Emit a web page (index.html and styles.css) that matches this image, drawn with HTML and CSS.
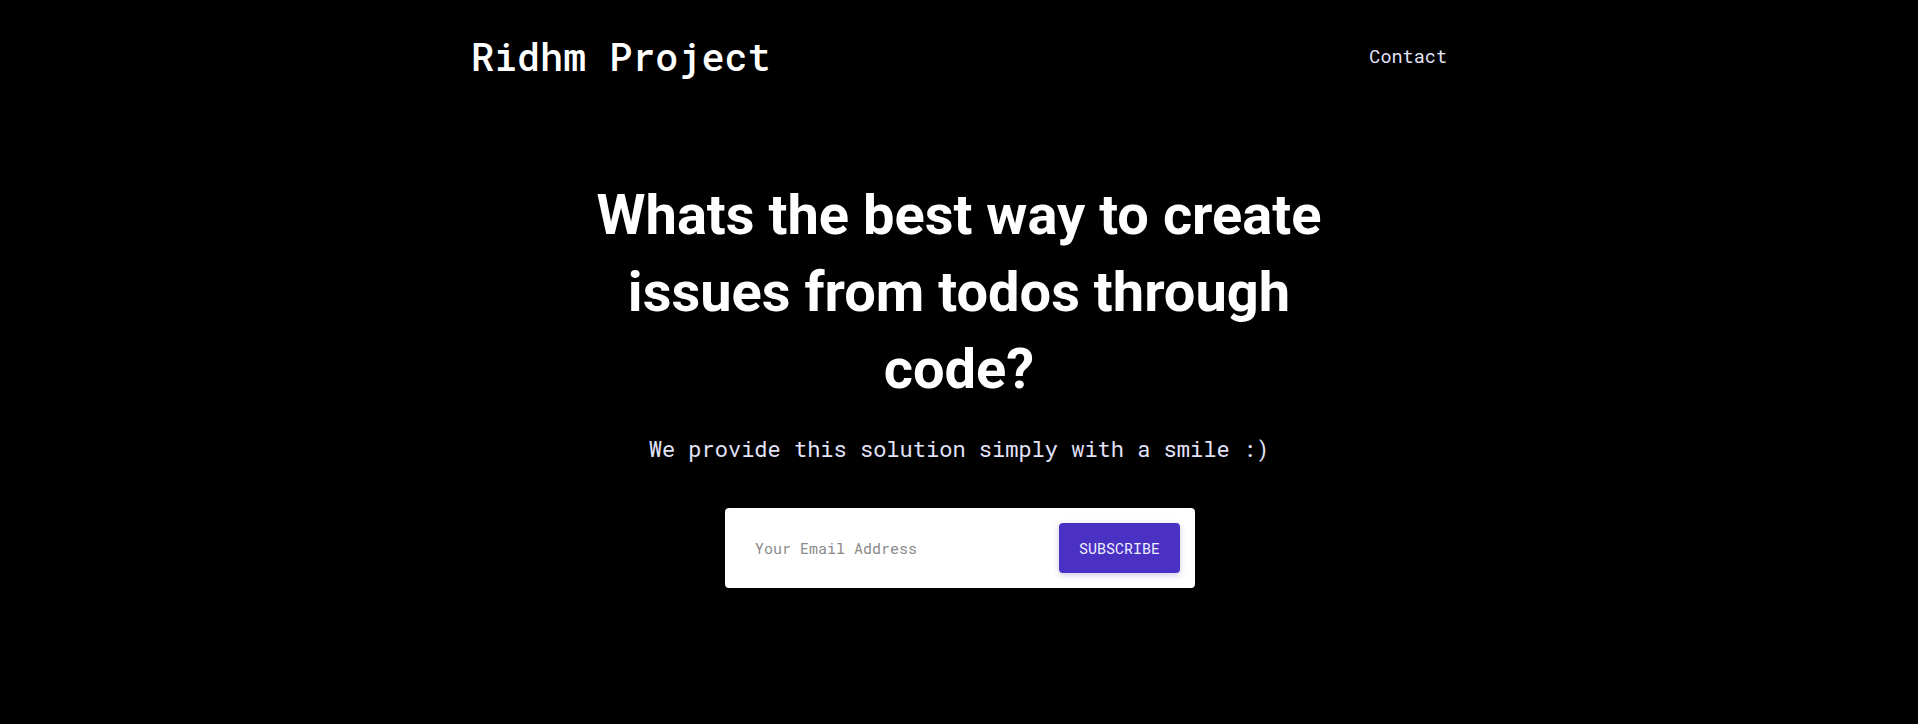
FILE: index.html
```html
<!DOCTYPE html>
<html lang="en">
<head>
<meta charset="utf-8">
<title>Ridhm Project</title>
<link rel="stylesheet" href="styles.css">
</head>
<body>
<div class="container">
  <header class="header">
    <a class="logo" href="#">Ridhm Project</a>
    <nav class="nav"><a class="nav-link" href="#">Contact</a></nav>
  </header>
  <main class="hero">
    <h1 class="title">Whats the best way to create issues from todos through code?</h1>
    <p class="subtitle">We provide this solution simply with a smile :)</p>
    <form class="subscribe">
      <input class="email" type="email" placeholder="Your Email Address" autofocus>
      <button class="btn" type="button">SUBSCRIBE</button>
    </form>
  </main>
</div>
</body>
</html>
```

FILE: styles.css
```css
html, body {
  margin: 0;
  padding: 0;
  background: #000;
}
body {
  font-family: "Roboto Mono", "DejaVu Sans Mono", "Liberation Mono", monospace;
  color: #fff;
}
.container {
  max-width: 1024px;
  margin: 0 auto;
  padding: 0 24px;
  box-sizing: border-box;
}
.header {
  height: 112px;
  display: flex;
  align-items: center;
  justify-content: space-between;
}
.logo {
  color: #fff;
  text-decoration: none;
  font-size: 38.4px;
  font-weight: 500;
  line-height: 1;
}
.nav-link {
  color: #e4e4fa;
  text-decoration: none;
  font-size: 18.5px;
}
.hero {
  display: flex;
  flex-direction: column;
  align-items: center;
  padding-top: 65px;
}
.title {
  margin: 0;
  max-width: 780px;
  font-family: Roboto, "Liberation Sans", sans-serif;
  font-weight: 700;
  font-size: 56px;
  line-height: 77px;
  text-align: center;
  color: #fff;
}
.subtitle {
  margin: 24px 0 0;
  font-size: 22px;
  line-height: 33px;
  color: #e2e2fa;
  text-align: center;
}
.subscribe {
  margin: 43px 0 0 2px;
  width: 470px;
  height: 80px;
  box-sizing: border-box;
  padding: 15px;
  background: #fff;
  border-radius: 4px;
  display: flex;
  align-items: center;
  gap: 10px;
}
.email {
  flex: 1;
  min-width: 0;
  border: none;
  outline: none;
  background: transparent;
  font-family: inherit;
  font-size: 15px;
  color: #333;
  padding: 0 0 0 15px;
  caret-color: #000;
}
.email::placeholder {
  color: #8a8a8a;
}
.btn {
  width: 121px;
  height: 50px;
  border: none;
  border-radius: 4px;
  background: #4a31c4;
  color: #eef0ff;
  font-family: inherit;
  font-size: 15px;
  box-shadow: 0 2px 6px rgba(60, 40, 160, 0.25);
  cursor: pointer;
}
```
